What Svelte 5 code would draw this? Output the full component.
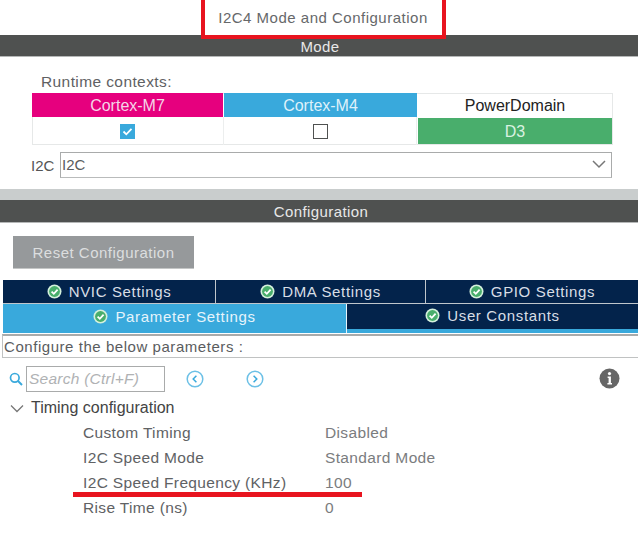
<script>
  const tabsTop = [
    { label: 'NVIC Settings', width: 213 },
    { label: 'DMA Settings', width: 210 },
    { label: 'GPIO Settings', width: 212 }
  ]

  const rows = [
    { name: 'Custom Timing', value: 'Disabled' },
    { name: 'I2C Speed Mode', value: 'Standard Mode' },
    { name: 'I2C Speed Frequency (KHz)', value: '100' },
    { name: 'Rise Time (ns)', value: '0' }
  ]
</script>

{#snippet okIcon()}
  <svg class="ok" width="15" height="15" viewBox="0 0 15 15">
    <circle cx="7.5" cy="7.5" r="7" fill="#d4f0dc" />
    <circle cx="7.5" cy="7.5" r="5.4" fill="#49ae6c" />
    <path d="M4.6 7.6 6.8 9.8 10.6 5.6" fill="none" stroke="#fff" stroke-width="1.8" />
  </svg>
{/snippet}

<div class="page">
  <div class="title">I2C4 Mode and Configuration</div>
  <div class="bar">Mode</div>

  <section class="mode">
    <div class="runtime">Runtime contexts:</div>
    <div class="contexts">
      <div class="cell m7">Cortex-M7</div>
      <div class="cell m4">Cortex-M4</div>
      <div class="cell pd">PowerDomain</div>
      <div class="cell check">
        <svg width="15" height="15" viewBox="0 0 15 15">
          <rect width="15" height="15" fill="#39a9dc" />
          <path d="M3.5 7.5 6.3 10.3 11.5 4.8" fill="none" stroke="#fff" stroke-width="1.8" />
        </svg>
      </div>
      <div class="cell check">
        <svg width="15" height="15" viewBox="0 0 15 15">
          <rect x="0.5" y="0.5" width="14" height="14" fill="#fff" stroke="#4f5150" />
        </svg>
      </div>
      <div class="cell d3">D3</div>
    </div>
    <div class="i2c-row">
      <span class="i2c-label">I2C</span>
      <div class="select">
        <span>I2C</span>
        <svg width="16" height="10" viewBox="0 0 16 10">
          <path d="M2 2 8 8 14 2" fill="none" stroke="#777" stroke-width="1.5" />
        </svg>
      </div>
    </div>
  </section>

  <div class="band"></div>
  <div class="bar conf">Configuration</div>

  <button class="reset" type="button">Reset Configuration</button>

  <div class="tabs">
    {#each tabsTop as tab}
      <div class="tab" style="width: {tab.width}px">{@render okIcon()}{tab.label}</div>
    {/each}
  </div>
  <div class="tabs second">
    <div class="tab active">{@render okIcon()}Parameter Settings</div>
    <div class="tab user">{@render okIcon()}User Constants</div>
  </div>

  <div class="hint">Configure the below parameters :</div>

  <div class="search-row">
    <svg class="lens" width="14" height="14" viewBox="0 0 14 14">
      <circle cx="5.8" cy="5.8" r="4.3" fill="none" stroke="#39a9dc" stroke-width="1.7" />
      <path d="M9 9 13 13" stroke="#39a9dc" stroke-width="2" />
    </svg>
    <div class="search">Search (Ctrl+F)</div>
    <svg class="nav first" width="18" height="18" viewBox="0 0 18 18">
      <circle cx="9" cy="9" r="7.8" fill="none" stroke="#6cc0e6" stroke-width="1.5" />
      <path d="M10.4 5.8 7.2 9 10.4 12.2" fill="none" stroke="#39a9dc" stroke-width="1.5" />
    </svg>
    <svg class="nav" width="18" height="18" viewBox="0 0 18 18">
      <circle cx="9" cy="9" r="7.8" fill="none" stroke="#6cc0e6" stroke-width="1.5" />
      <path d="M7.6 5.8 10.8 9 7.6 12.2" fill="none" stroke="#39a9dc" stroke-width="1.5" />
    </svg>
    <svg class="info" width="21" height="21" viewBox="0 0 21 21">
      <circle cx="10.5" cy="10.5" r="10" fill="#666" />
      <circle cx="10.5" cy="5.6" r="1.6" fill="#fff" />
      <path d="M8.6 8.6H11.9V15H13V16.4H8.4V15H9.6V10H8.6Z" fill="#fff" />
    </svg>
  </div>

  <div class="group">
    <svg width="14" height="9" viewBox="0 0 14 9">
      <path d="M1 1.5 7 7.5 13 1.5" fill="none" stroke="#777" stroke-width="1.3" />
    </svg>
    <span>Timing configuration</span>
  </div>

  <div class="params">
    {#each rows as row}
      <div class="param">
        <span class="name">{row.name}</span>
        <span class="value">{row.value}</span>
      </div>
    {/each}
  </div>

  <!-- annotations drawn on top of the screenshot -->
  <div class="mark-box"></div>
  <div class="mark-line"></div>
</div>

<style>
  :global(body) {
    margin: 0;
    background: #fff;
  }

  .page {
    position: relative;
    width: 638px;
    height: 535px;
    overflow: hidden;
    font-family: 'Liberation Sans', Arial, sans-serif;
    font-size: 15px;
    color: #555;
  }

  .title {
    height: 35px;
    line-height: 36px;
    text-align: center;
    padding-left: 8px;
    letter-spacing: 0.5px;
    color: #66686a;
  }

  .bar {
    height: 21px;
    line-height: 24px;
    padding-left: 2px;
    text-align: center;
    background: #4f5150;
    border-bottom: 1px solid #b5b7b7;
    color: #e8e8e8;
    letter-spacing: 0.4px;
  }

  .mode {
    height: 132px;
    box-sizing: border-box;
    padding: 17px 26px 0 31px;
  }

  .runtime {
    margin-left: 10px;
    height: 19px;
    line-height: 16px;
    font-size: 15.5px;
    letter-spacing: 0.4px;
    color: #5f6163;
  }

  .contexts {
    display: grid;
    grid-template-columns: 192px 193px 196px;
    grid-template-rows: 24px 28px;
    width: 581px;
    margin-left: 1px;
    box-shadow: inset 0 0 0 1px #e6e8e8;
  }

  .cell {
    display: flex;
    align-items: center;
    justify-content: center;
    padding-top: 2px;
    font-size: 16px;
    box-sizing: border-box;
  }

  .m7 {
    background: #e6007e;
    color: #f5d5e8;
    margin-right: 1px;
  }

  .m4 {
    background: #39a9dc;
    color: #dff1fa;
  }

  .pd {
    color: #222;
  }

  .check {
    padding-top: 0;
    border-right: 1px solid #eceeee;
  }

  .d3 {
    background: #49ae6c;
    color: #d9f2e1;
    margin: 1px;
  }

  .i2c-row {
    display: flex;
    align-items: center;
    gap: 4px;
    margin-top: 7px;
  }

  .i2c-label {
    width: 25px;
    color: #555;
  }

  .select {
    flex: 1;
    height: 26px;
    box-sizing: border-box;
    border: 1px solid #a9abab;
    border-bottom-color: #b9bbbb;
    display: flex;
    align-items: center;
    justify-content: space-between;
    padding: 0 4px 2px 1px;
    color: #5a5c5e;
  }

  .band {
    height: 11px;
    background: #c9cdcd;
  }

  .conf {
    height: 22px;
    line-height: 23px;
    padding-left: 4px;
  }

  .reset {
    display: block;
    width: 181px;
    height: 33px;
    margin: 13px 0 11px 13px;
    padding: 0;
    border: none;
    border-bottom: 1px solid #c4c6c6;
    background: #96999b;
    color: #dcdedf;
    font-family: inherit;
    font-size: 15px;
    letter-spacing: 0.5px;
  }

  .tabs {
    display: flex;
    margin-left: 3px;
    height: 23px;
    border-bottom: 1px solid #c0c6cc;
  }

  .tab {
    display: flex;
    align-items: center;
    justify-content: center;
    gap: 7px;
    padding-bottom: 1px;
    box-sizing: border-box;
    background: #03234b;
    color: #d8dee6;
    letter-spacing: 0.65px;
    border-right: 1px solid #c0c6cc;
  }

  .tab:last-child {
    border-right: none;
  }

  .second {
    height: 29px;
    border-bottom: none;
    background: #39a9dc;
  }

  .active {
    width: 344px;
    padding-bottom: 5px;
    background: #39a9dc;
    color: #e6f4fb;
    border-right: 1px solid #e6f4fb;
  }

  .user {
    width: 291px;
    height: 25px;
    padding-bottom: 2px;
  }

  .hint {
    height: 24px;
    line-height: 22px;
    box-sizing: border-box;
    margin: 1px 0 0 2px;
    padding-left: 1px;
    border: 1px solid #c0c2c2;
    border-right: none;
    border-top: 2px solid #a9abab;
    color: #5a5c5e;
    letter-spacing: 0.55px;
  }

  .search-row {
    display: flex;
    align-items: center;
    height: 27px;
    margin-top: 7px;
    padding-left: 9px;
  }

  .lens {
    flex: none;
    margin-right: 3px;
  }

  .search {
    width: 139px;
    height: 26px;
    line-height: 24px;
    box-sizing: border-box;
    padding-left: 2px;
    border: 1px solid #a9abab;
    font-size: 15.5px;
    font-style: italic;
    color: #b0b2b4;
    letter-spacing: 0.25px;
  }

  .nav {
    flex: none;
    margin-left: 42px;
  }

  .nav.first {
    margin-left: 21px;
  }

  .info {
    margin-left: auto;
    margin-right: 18px;
  }

  .group {
    display: flex;
    align-items: center;
    gap: 7px;
    height: 25px;
    box-sizing: border-box;
    margin-top: 5px;
    padding: 0 0 3px 10px;
    color: #444;
    font-size: 16px;
  }

  .params {
    padding-left: 83px;
  }

  .param {
    display: flex;
    height: 25px;
    line-height: 21px;
    letter-spacing: 0.35px;
    font-size: 15.5px;
  }

  .name {
    width: 242px;
    color: #606264;
  }

  .value {
    color: #7a7c7e;
  }

  .mark-box {
    position: absolute;
    left: 201px;
    top: -4px;
    width: 237px;
    height: 35px;
    border: 4px solid #e8141f;
  }

  .mark-line {
    position: absolute;
    left: 73px;
    top: 492px;
    width: 289px;
    height: 5px;
    background: #e8141f;
  }
</style>
